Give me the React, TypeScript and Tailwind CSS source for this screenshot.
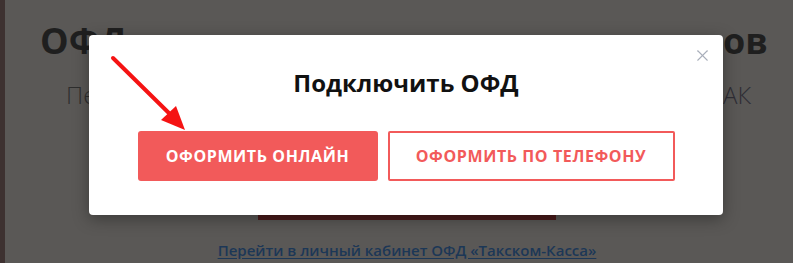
import { X } from "lucide-react";

function Arrow() {
  return (
    <svg
      className="absolute left-0 top-0 pointer-events-none"
      width="793"
      height="263"
      viewBox="0 0 793 263"
    >
      <line x1="113" y1="58" x2="178" y2="122" stroke="#f51313" strokeWidth="4" strokeLinecap="round" />
      <polygon points="185,130 161,120 176,106" fill="#f51313" />
    </svg>
  );
}

export default function App() {
  return (
    <div className="relative w-[793px] h-[263px] overflow-hidden bg-[#5a5856] font-['Open_Sans','Liberation_Sans',sans-serif]">
      {/* page behind the overlay */}
      <div className="flex h-full">
        <div className="w-[5px] bg-[#3d3130]" />
        <div className="flex-1 flex flex-col">
          <div className="flex justify-between items-start pl-[35px] pr-[15px] pt-[19px]">
            <div className="flex flex-col">
              <span className="text-[36px] leading-[44px] font-bold text-[#1f1f1f]">ОФД</span>
              <span className="pl-[26px] mt-[16px] text-[24px] leading-[32px] font-light text-[#2e2e2e]">Пе</span>
            </div>
            <div className="flex flex-col w-[55px]">
              <span className="text-[36px] leading-[44px] font-bold text-[#1f1f1f]">ов</span>
              <span className="mt-[16px] text-[24px] leading-[32px] font-light text-[#2e2d35]">АК</span>
            </div>
          </div>
          <div className="mt-[104px] ml-[253px] w-[298px] h-[5px] bg-[#4a1b1b]" />
          <div className="mt-[19px] flex justify-center pl-[16px]">
            <a className="text-[15px] leading-[22px] font-semibold text-[#1c3756] underline underline-offset-2">
              Перейти в личный кабинет ОФД «Такском-Касса»
            </a>
          </div>
        </div>
      </div>

      {/* modal */}
      <div className="absolute left-[89px] top-[35px] w-[634px] h-[180px] bg-white rounded-[4px] shadow-[0_4px_16px_rgba(0,0,0,0.35)] flex flex-col items-center">
        <button className="absolute right-[11px] top-[11px] text-[#a9afba]">
          <X size={19} strokeWidth={1.4} />
        </button>
        <h2 className="mt-[33px] text-[24px] leading-[30px] font-bold text-[#111]">Подключить ОФД</h2>
        <div className="mt-[33px] flex gap-[10px]">
          <button className="w-[240px] h-[50px] rounded-[3px] bg-[#f25a5a] text-white text-[16px] font-bold uppercase tracking-[0.6px]">
            Оформить онлайн
          </button>
          <button className="w-[287px] h-[50px] rounded-[2px] border-2 border-[#f25a5a] bg-white text-[#f25a5a] text-[16px] font-bold uppercase tracking-[0.6px]">
            Оформить по телефону
          </button>
        </div>
      </div>

      <Arrow />
    </div>
  );
}
